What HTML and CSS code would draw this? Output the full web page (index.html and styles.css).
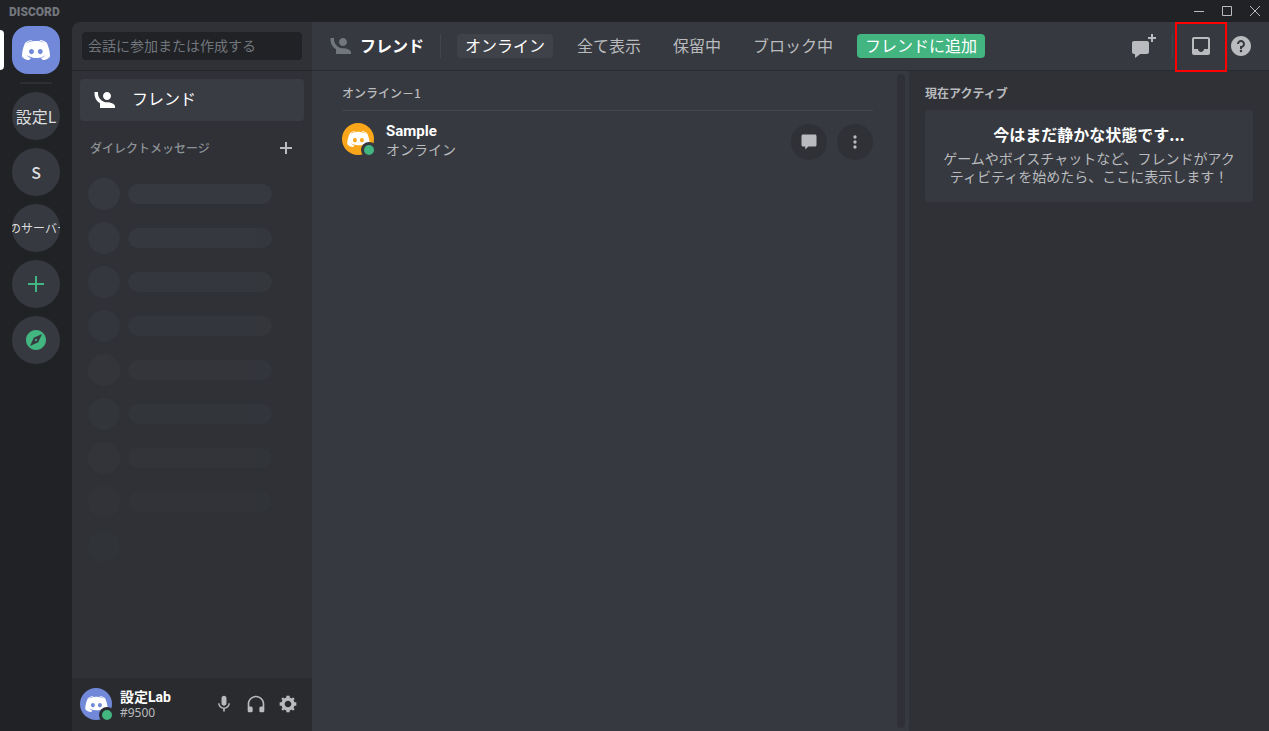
FILE: index.html
```html
<!DOCTYPE html>
<html lang="ja">
<head>
<meta charset="utf-8">
<title>Discord</title>
<link rel="stylesheet" href="styles.css">
</head>
<body>
<svg class="defs" aria-hidden="true">
  <symbol id="clyde" viewBox="0 0 28 20"><path d="M20.66 20S19.8 18.98 19.08 18.07C22.22 17.19 23.42 15.24 23.42 15.24C22.44 15.88 21.5 16.33 20.66 16.64C19.47 17.14 18.32 17.48 17.19 17.67C14.89 18.1 12.78 17.98 10.98 17.64C9.61 17.38 8.44 17 7.46 16.62C6.9 16.4 6.3 16.14 5.71 15.81C5.63 15.76 5.56 15.74 5.49 15.69C5.44 15.67 5.42 15.64 5.39 15.62C4.96 15.38 4.72 15.21 4.72 15.21S5.87 17.12 8.92 18.02C8.2 18.93 7.31 20 7.31 20C2.01 19.83 0 16.38 0 16.38C0 8.71 3.45 2.5 3.45 2.5C6.9 -.07 10.19 0 10.19 0L10.43 .29C6.11 1.52 4.12 3.4 4.12 3.4S4.65 3.12 5.54 2.71C8.1 1.6 10.14 1.29 10.98 1.21C11.12 1.19 11.24 1.17 11.39 1.17C12.85 .98 14.5 .93 16.23 1.12C18.51 1.38 20.95 2.05 23.45 3.4C23.45 3.4 21.55 1.62 17.48 .38L17.81 0S21.1 -.07 24.55 2.5C24.55 2.5 28 8.71 28 16.38C28 16.38 25.96 19.83 20.66 20ZM9.52 8.88C8.15 8.88 7.07 10.07 7.07 11.52S8.17 14.17 9.52 14.17C10.88 14.17 11.96 12.98 11.96 11.52C11.99 10.07 10.88 8.88 9.52 8.88ZM18.27 8.88C16.9 8.88 15.82 10.07 15.82 11.52S16.92 14.17 18.27 14.17C19.63 14.17 20.71 12.98 20.71 11.52S19.63 8.88 18.27 8.88Z"/></symbol>
  <symbol id="friends" viewBox="0 0 24 24"><path transform="translate(2 4)" d="M.5 0V1.5C.5 5.65 2.71 9.28 6 11.3V16H21V14.34C21 11.67 15.67 10.33 13 10.33C8 10.33 4 6 4 1.5V0ZM13 0C10.79 0 9 1.79 9 4S10.79 8 13 8S17 6.21 17 4S15.21 0 13 0Z"/></symbol>
  <symbol id="compass" viewBox="0 0 24 24"><path d="M12 10.9C11.39 10.9 10.9 11.39 10.9 12S11.39 13.1 12 13.1S13.1 12.61 13.1 12S12.61 10.9 12 10.9ZM12 2C6.48 2 2 6.48 2 12S6.48 22 12 22S22 17.52 22 12S17.52 2 12 2ZM14.19 14.19L6 18L9.81 9.81L18 6Z"/></symbol>
  <symbol id="mic" viewBox="0 0 24 24"><path d="M14.99 11C14.99 12.66 13.66 14 12 14S9 12.66 9 11V5C9 3.34 10.34 2 12 2S15 3.34 15 5ZM12 16.1C14.76 16.1 17.3 14 17.3 11H19C19 14.42 16.28 17.24 13 17.72V21H11V17.72C7.72 17.23 5 14.41 5 11H6.7C6.7 14 9.24 16.1 12 16.1Z"/></symbol>
  <symbol id="headphones" viewBox="0 0 24 24"><path d="M12 2C6.49 2 2 6.49 2 12V20C2 21.1 2.9 22 4 22H6C7.1 22 8 21.1 8 20V17C8 15.9 7.1 15 6 15H4V12C4 7.59 7.59 4 12 4S20 7.59 20 12V15H18C16.9 15 16 15.9 16 17V20C16 21.1 16.9 22 18 22H20C21.1 22 22 21.1 22 20V12C22 6.49 17.51 2 12 2Z"/></symbol>
  <symbol id="gear" viewBox="0 0 24 24"><path fill-rule="evenodd" d="M19.74 10H22V14H19.74C19.5 14.93 19.1 15.8 18.57 16.56L20 18L18 20L16.57 18.56C15.8 19.1 14.93 19.5 14 19.74V22H10V19.74C9.07 19.5 8.2 19.1 7.44 18.56L6 20L4 18L5.44 16.56C4.9 15.8 4.5 14.93 4.26 14H2V10H4.26C4.5 9.07 4.9 8.2 5.44 7.44L4 6L6 4L7.44 5.44C8.2 4.9 9.07 4.5 10 4.26V2H14V4.26C14.93 4.5 15.8 4.9 16.57 5.44L18 4L20 6L18.56 7.44C19.1 8.2 19.5 9.07 19.74 10ZM12 16C14.21 16 16 14.21 16 12S14.21 8 12 8S8 9.79 8 12S9.79 16 12 16Z"/></symbol>
  <symbol id="new-dm" viewBox="0 0 24 24"><path d="M21 0V3H24V5H21V8H19V5H16V3H19V0ZM3 20V24L8.33 20H15C16.1 20 17 19.1 17 18V9C17 7.9 16.1 7 15 7H2C.9 7 0 7.9 0 9V18C0 19.1 .9 20 2 20Z"/></symbol>
  <symbol id="inbox" viewBox="0 0 24 24"><path d="M19 3H5C3.88 3 3 3.89 3 5V19C3 20.1 3.88 21 5 21H19C20.1 21 21 20.1 21 19V5C21 3.89 20.1 3 19 3ZM19 15H15C15 16.66 13.65 18 12 18S9 16.66 9 15H5V5H19Z"/></symbol>
  <symbol id="help" viewBox="0 0 24 24"><path d="M12 2C6.49 2 2 6.49 2 12S6.49 22 12 22S22 17.51 22 12S17.51 2 12 2ZM12 18.25C11.31 18.25 10.75 17.69 10.75 17S11.31 15.75 12 15.75S13.25 16.31 13.25 17S12.69 18.25 12 18.25ZM13 13.88V15H11V12H12C13.1 12 14 11.1 14 10S13.1 8 12 8S10 8.9 10 10H8C8 7.8 9.8 6 12 6S16 7.8 16 10C16 11.86 14.72 13.43 13 13.88Z"/></symbol>
  <symbol id="message" viewBox="0 0 24 24"><path d="M4.8 3C3.8 3 3 3.8 3 4.8V15.6C3 16.6 3.8 17.4 4.8 17.4H7.5V21L11.1 17.4H19.2C20.2 17.4 21 16.6 21 15.6V4.8C21 3.8 20.2 3 19.2 3Z"/></symbol>
  <symbol id="more" viewBox="0 0 24 24"><circle cx="12" cy="6" r="2"/><circle cx="12" cy="12" r="2"/><circle cx="12" cy="18" r="2"/></symbol>
</svg>
<div class="app">
  <header class="titlebar">
    <span class="wordmark">DISCORD</span>
    <div class="window-controls">
      <button aria-label="最小化"><svg viewBox="0 0 12 12"><path d="M1 6.5H11"/></svg></button>
      <button aria-label="最大化"><svg viewBox="0 0 12 12"><path d="M1.5 1.5H10.5V10.5H1.5Z"/></svg></button>
      <button aria-label="閉じる"><svg viewBox="0 0 12 12"><path d="M1 1L11 11M11 1L1 11"/></svg></button>
    </div>
  </header>
  <div class="body">
    <nav class="guilds" aria-label="サーバー">
      <div class="home-wrap"><button class="guild home" aria-label="ホーム"><svg class="logo"><use href="#clyde"/></svg></button></div>
      <div class="guild-separator"></div>
      <button class="guild">設定L</button>
      <button class="guild guild-letter">S</button>
      <button class="guild guild-small">のサーバー</button>
      <button class="guild green" aria-label="サーバーを追加"><svg class="icon" viewBox="0 0 24 24"><path d="M11 4H13V11H20V13H13V20H11V13H4V11H11Z"/></svg></button>
      <button class="guild green" aria-label="公開サーバーを探す"><svg class="icon"><use href="#compass"/></svg></button>
    </nav>
    <aside class="sidebar">
      <div class="search"><input class="search-input" type="text" aria-label="会話に参加または作成する" placeholder="会話に参加または作成する"></div>
      <div class="dm-list">
        <a class="friends-link" href="#"><svg class="icon"><use href="#friends"/></svg><span>フレンド</span></a>
        <div class="dm-heading"><h2>ダイレクトメッセージ</h2><button aria-label="DMを作成"><svg viewBox="0 0 12 12"><path d="M5 0H7V5H12V7H7V12H5V7H0V5H5Z"/></svg></button></div>
        <div class="skeletons">
          <div class="skeleton s1"><i></i><b></b></div>
          <div class="skeleton s2"><i></i><b></b></div>
          <div class="skeleton s3"><i></i><b></b></div>
          <div class="skeleton s4"><i></i><b></b></div>
          <div class="skeleton s5"><i></i><b></b></div>
          <div class="skeleton s6"><i></i><b></b></div>
          <div class="skeleton s7"><i></i><b></b></div>
          <div class="skeleton s8"><i></i><b></b></div>
          <div class="skeleton s9"><i></i></div>
        </div>
      </div>
      <footer class="user-panel">
        <div class="avatar blue"><svg><use href="#clyde"/></svg><span class="status"></span></div>
        <div class="user-names"><strong>設定Lab</strong><span>#9500</span></div>
        <button aria-label="ミュート"><svg><use href="#mic"/></svg></button>
        <button aria-label="スピーカーミュート"><svg><use href="#headphones"/></svg></button>
        <button aria-label="ユーザー設定"><svg><use href="#gear"/></svg></button>
      </footer>
    </aside>
    <main class="main">
      <header class="toolbar">
        <svg class="icon toolbar-icon"><use href="#friends"/></svg>
        <h1>フレンド</h1>
        <span class="divider"></span>
        <div class="tabs">
          <button class="tab active">オンライン</button>
          <button class="tab">全て表示</button>
          <button class="tab">保留中</button>
          <button class="tab">ブロック中</button>
          <button class="tab add">フレンドに追加</button>
        </div>
        <div class="tools">
          <button aria-label="新規グループDM"><svg class="icon"><use href="#new-dm"/></svg></button>
          <span class="divider"></span>
          <button class="inbox" aria-label="受信ボックス"><svg class="icon"><use href="#inbox"/></svg></button>
          <button aria-label="ヘルプ"><svg class="icon"><use href="#help"/></svg></button>
        </div>
      </header>
      <div class="columns">
        <section class="people">
          <div class="people-list">
            <h2>オンライン－1</h2>
            <div class="person">
              <div class="avatar orange"><svg><use href="#clyde"/></svg><span class="status"></span></div>
              <div class="person-text"><strong>Sample</strong><span>オンライン</span></div>
              <button aria-label="メッセージ"><svg><use href="#message"/></svg></button>
              <button aria-label="その他"><svg><use href="#more"/></svg></button>
            </div>
          </div>
          <div class="scroll-track"></div>
        </section>
        <aside class="activity">
          <h2>現在アクティブ</h2>
          <div class="card">
            <h3>今はまだ静かな状態です...</h3>
            <p>ゲームやボイスチャットなど、フレンドがアクティビティを始めたら、ここに表示します！</p>
          </div>
        </aside>
      </div>
    </main>
  </div>
</div>
</body>
</html>
```

FILE: styles.css
```css
*, *::before, *::after { box-sizing: border-box; }
body { margin: 0; background: #202225; color: #dcddde; font: 16px/20px "Noto Sans CJK JP", "Noto Sans", sans-serif; }
h1, h2, h3, p { margin: 0; }
button { display: flex; align-items: center; justify-content: center; flex: none; padding: 0; border: 0; background: none; color: inherit; font: inherit; }
svg { display: block; fill: currentColor; }
.defs { position: absolute; width: 0; height: 0; }
.icon { width: 24px; height: 24px; flex: none; }
.app { display: flex; flex-direction: column; height: 100vh; overflow: hidden; }

.titlebar { display: flex; justify-content: space-between; height: 22px; flex: none; }
.wordmark { padding: 2px 0 0 9px; color: #72767d; font: 900 12px/20px Roboto, sans-serif; }
.window-controls { display: flex; color: #b9bbbe; }
.window-controls button { width: 28px; height: 22px; }
.window-controls svg { width: 12px; height: 12px; fill: none; stroke: currentColor; }

.body { display: flex; flex: 1; min-height: 0; }
.guilds { display: flex; flex-direction: column; align-items: center; gap: 8px; width: 72px; flex: none; padding-top: 4px; }
.guild { width: 48px; height: 48px; border-radius: 50%; overflow: hidden; background: #36393f; white-space: nowrap; }
.guild-letter { font-weight: 500; }
.guild-small { padding-left: 6px; font-size: 12px; }
.home-wrap { display: flex; justify-content: center; align-self: stretch; position: relative; }
.home-wrap::before { content: ""; position: absolute; left: 0; top: 4px; width: 4px; height: 40px; border-radius: 0 4px 4px 0; background: #fff; }
.home { border-radius: 16px; background: #7289da; color: #fff; }
.logo { width: 28px; height: 20px; }
.guild-separator { width: 32px; height: 2px; background: #2d2f32; }
.green { color: #43b581; }

.sidebar { display: flex; flex-direction: column; width: 240px; flex: none; background: #2f3136; border-radius: 8px 0 0; overflow: hidden; }
.search { height: 49px; padding: 10px; border-bottom: 1px solid #242629; flex: none; }
.search-input { display: block; width: 100%; height: 28px; padding: 0 6px 2px; border: 0; border-radius: 4px; background: #202225; color: #dcddde; font: inherit; font-size: 14px; }
.search-input::placeholder { color: #72767d; opacity: 1; }
.dm-list { flex: 1; min-height: 0; padding: 8px; overflow: hidden; }
.friends-link { display: flex; align-items: center; gap: 16px; height: 42px; padding: 0 12px; border-radius: 4px; background: #393c43; color: #fff; text-decoration: none; }
.friends-link span { padding-bottom: 4px; }
.dm-heading { display: flex; align-items: center; justify-content: space-between; height: 24px; margin-top: 15px; padding: 0 12px 0 10px; color: #b9bbbe; }
.dm-heading h2 { color: #8e9297; font-size: 12px; font-weight: 500; }
.dm-heading svg { width: 12px; height: 12px; }
.skeletons { display: grid; gap: 12px; padding: 18px 8px 0; }
.skeleton { display: flex; align-items: center; gap: 8px; }
.skeleton i { width: 32px; height: 32px; border-radius: 50%; background: #36393f; }
.skeleton b { width: 144px; height: 20px; border-radius: 10px; background: #36393f; }
.s2 { opacity: .9; } .s3 { opacity: .8; } .s4 { opacity: .7; } .s5 { opacity: .6; }
.s6 { opacity: .5; } .s7 { opacity: .45; } .s8 { opacity: .3; } .s9 { opacity: .3; }

.user-panel { display: flex; align-items: center; height: 53px; padding: 0 8px 2px; flex: none; background: #292b2f; color: #b9bbbe; }
.user-names { flex: 1; margin-left: 8px; }
.user-names strong, .user-names span { display: block; }
.user-names strong { color: #fff; font: 700 14px/18px Roboto, "Noto Sans CJK JP", sans-serif; }
.user-names span { font: 12px/14px "Noto Sans", sans-serif; }
.user-panel button { width: 32px; height: 32px; }
.user-panel button svg { width: 20px; height: 20px; }
.avatar { display: flex; align-items: center; justify-content: center; position: relative; width: 32px; height: 32px; flex: none; border-radius: 50%; color: #fff; }
.avatar svg { width: 23px; height: 16px; }
.blue { background: #7289da; }
.orange { background: #faa61a; }
.status { position: absolute; right: -3px; bottom: -3px; width: 16px; height: 16px; border: 3px solid #36393f; border-radius: 50%; background: #43b581; }
.blue .status { border-color: #292b2f; }

.main { display: flex; flex-direction: column; flex: 1; min-width: 0; background: #36393f; }
.toolbar { display: flex; align-items: center; height: 49px; flex: none; padding: 0 16px; border-bottom: 1px solid #292b2f; color: #b9bbbe; }
.toolbar-icon { color: #72767d; }
.toolbar h1 { margin: 0 16px 0 8px; padding-bottom: 2px; color: #fff; font-size: 16px; line-height: 20px; }
.divider { width: 1px; height: 24px; background: #42454b; }
.tabs { display: flex; gap: 16px; margin-left: 16px; }
.tab { height: 24px; padding: 0 8px 2px; border-radius: 4px; white-space: nowrap; }
.active { background: #3f4248; color: #fff; }
.add { background: #43b581; color: #fff; }
.tools { display: flex; align-items: center; gap: 16px; margin-left: auto; }
.inbox { position: relative; }
.inbox::after { content: ""; position: absolute; left: -14px; top: -12px; width: 52px; height: 50px; border: 2px solid #f00; }

.columns { display: flex; flex: 1; min-height: 0; }
.people { display: flex; flex: 1; min-width: 0; padding-right: 4px; }
.people-list { flex: 1; padding: 12px 24px 0 30px; }
.columns h2 { color: #b9bbbe; font-size: 12px; font-weight: 500; line-height: 20px; }
.person { display: flex; align-items: center; gap: 10px; height: 62px; margin-top: 7px; border-top: 1px solid #42454b; color: #b9bbbe; }
.person .avatar { margin-bottom: 5px; }
.person-text { flex: 1; margin-bottom: 3px; padding-left: 2px; }
.person-text strong, .person-text span { display: block; line-height: 18px; }
.person-text strong { color: #fff; font-family: Roboto, sans-serif; font-size: 15px; }
.person-text span { font-size: 14px; }
.person button { width: 36px; height: 36px; border-radius: 50%; background: #2f3136; }
.person button svg { width: 20px; height: 20px; }
.scroll-track { width: 8px; margin: 3px 0; border-radius: 4px; background: #2f3136; }
.activity { width: 360px; flex: none; padding: 12px 16px; background: #2f3136; }
.activity h2 { font-weight: 700; }
.card { margin-top: 7px; padding: 14px 16px 17px; border-radius: 4px; background: #36393f; color: #b9bbbe; text-align: center; }
.card h3 { margin-bottom: 5px; color: #fff; font-size: 16px; line-height: 20px; }
.card p { font-size: 14px; line-height: 18px; }
```
